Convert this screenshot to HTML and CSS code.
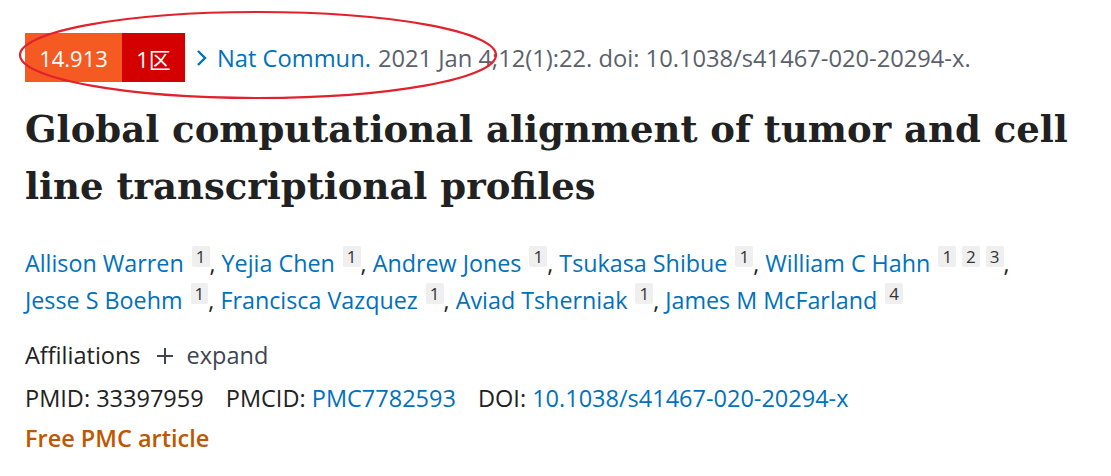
FILE: index.html
```html
<!DOCTYPE html>
<html>
<head>
<meta charset="utf-8">
<link rel="stylesheet" href="styles.css">
</head>
<body>
<div class="page">
  <div class="citation">
    <span class="badge"><span class="if">14.913</span><span class="zone">1区</span></span>
    <span class="chev"><svg width="12" height="18" viewBox="0 0 12 18"><path d="M2 2 L9 9 L2 16" fill="none" stroke="#0071bc" stroke-width="2.4"/></svg></span>
    <a class="journal">Nat Commun.</a>
    <span class="cit">2021 Jan 4;12(1):22. doi: 10.1038/s41467-020-20294-x.</span>
    <svg class="ring" width="490" height="96" viewBox="0 0 490 96"><ellipse cx="245" cy="47" rx="238" ry="43" fill="none" stroke="#e3202b" stroke-width="2.2"/></svg>
  </div>
  <h1 class="title">Global computational alignment of tumor and cell line transcriptional profiles</h1>
  <div class="authors">
    <span class="au"><a>Allison Warren</a> <sup>1</sup>,</span>
    <span class="au"><a>Yejia Chen</a> <sup>1</sup>,</span>
    <span class="au"><a>Andrew Jones</a> <sup>1</sup>,</span>
    <span class="au"><a>Tsukasa Shibue</a> <sup>1</sup>,</span>
    <span class="au"><a>William C Hahn</a> <sup>1</sup><sup>2</sup><sup>3</sup>,</span>
    <span class="au"><a>Jesse S Boehm</a> <sup>1</sup>,</span>
    <span class="au"><a>Francisca Vazquez</a> <sup>1</sup>,</span>
    <span class="au"><a>Aviad Tsherniak</a> <sup>1</sup>,</span>
    <span class="au"><a>James M McFarland</a> <sup>4</sup></span>
  </div>
  <div class="affil">Affiliations <span class="expand"><svg class="plus" width="16" height="16" viewBox="0 0 16 16"><path d="M8 0 V16 M0 8 H16" stroke="#3d4551" stroke-width="2"/></svg>expand</span></div>
  <div class="ids">
    <span class="id">PMID: 33397959</span>
    <span class="id">PMCID: <a>PMC7782593</a></span>
    <span class="id">DOI: <a>10.1038/s41467-020-20294-x</a></span>
  </div>
  <div class="free">Free PMC article</div>
</div>
</body>
</html>
```
FILE: styles.css
```css
html, body { margin: 0; padding: 0; background: #fff; }
body { font-family: "Open Sans", "Noto Sans", sans-serif; color: #212121; }
.page { padding: 33px 0 0 25px; }
a { color: #0071bc; text-decoration: none; }
.citation { position: relative; display: flex; align-items: center; height: 49px; font-size: 23.7px; color: #5b616b; }
.badge { display: flex; height: 49px; color: #fff; font-size: 22px; }
.badge .if { background: #f55a22; width: 97px; display: flex; align-items: center; justify-content: center; }
.badge .zone { background: #d40000; width: 63px; display: flex; align-items: center; justify-content: center; font-family: "Open Sans", "Noto Sans CJK SC", sans-serif; }
.chev { margin: 0 9px 0 11px; display: flex; align-items: center; }
.journal { margin-right: 7px; }
.ring { position: absolute; left: -12px; top: -25px; }
.title { font-family: "DejaVu Serif", serif; font-weight: bold; font-size: 37px; line-height: 57px; margin: 19px 0 0 0; color: #212121; }
.authors { margin-top: 30px; font-size: 23.3px; line-height: 37px; color: #212121; padding-right: 60px; }
.au { white-space: nowrap; }
.authors sup { display: inline-block; background: #efefef; color: #333; font-size: 17px; line-height: 21px; padding: 0 4px; border-radius: 2px; vertical-align: top; margin: 1px 0 0 2px; }
.authors sup + sup { margin-left: 6px; }
.affil { margin-top: 18px; font-size: 23.5px; line-height: 37px; display: flex; align-items: center; }
.expand { margin-left: 16px; color: #3d4551; display: flex; align-items: center; }
.plus { margin-right: 14px; }
.ids { font-size: 23.5px; line-height: 40px; margin-top: 4px; }
.id { margin-right: 16px; }
.free { color: #c05600; font-weight: 600; font-size: 23.5px; line-height: 40px; }
```
